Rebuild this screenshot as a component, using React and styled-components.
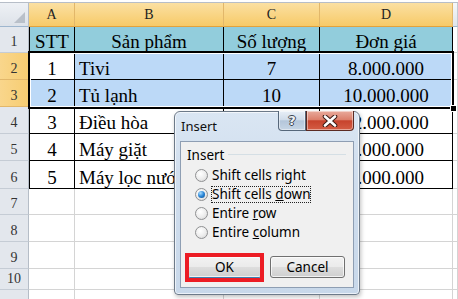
import React from 'react';
import styled, { createGlobalStyle } from 'styled-components';

const GlobalStyle = createGlobalStyle`
  html, body { margin: 0; padding: 0; background: #fff; }
  body { width: 458px; height: 299px; overflow: hidden; }
`;

const COLS = '29px 46px 149px 96px 133px 1fr';

const Sheet = styled.div`
  position: relative;
  width: 458px;
  height: 299px;
  overflow: hidden;
  background: #fff;
  font-family: "Liberation Serif", "Times New Roman", serif;
`;

const TopStrip = styled.div`
  height: 2px;
  background: #fff;
  border-bottom: 1px solid #b7bec8;
`;

const Row = styled.div`
  display: grid;
  grid-template-columns: ${COLS};
  height: ${p => p.$h}px;
`;

const Corner = styled.div`
  position: relative;
  box-sizing: border-box;
  background: linear-gradient(#eef1f5, #dde2e9);
  border-right: 1px solid #b5bdc7;
  border-bottom: 1px solid #9eb6ce;
  &::after {
    content: '';
    position: absolute;
    right: 3px;
    bottom: 3px;
    border-left: 11px solid transparent;
    border-bottom: 11px solid #b9c0c9;
  }
`;

const ColHead = styled.div`
  box-sizing: border-box;
  display: flex;
  align-items: center;
  justify-content: center;
  font-size: 14px;
  color: #222;
  background: ${p => p.$sel
    ? 'linear-gradient(#fbe0a2, #f7ca68)'
    : 'linear-gradient(#f6f8fa, #dfe4ea)'};
  border-right: 1px solid ${p => (p.$sel ? '#e2b76a' : '#c3cad3')};
  border-bottom: 1px solid ${p => (p.$sel ? '#e2a23c' : '#9eb6ce')};
`;

const RowHead = styled.div`
  box-sizing: border-box;
  display: flex;
  align-items: flex-end;
  justify-content: center;
  padding-bottom: 2px;
  font-size: 14px;
  line-height: 16px;
  color: #333;
  background: ${p => (p.$sel ? 'linear-gradient(90deg, #f9d68c, #f7cd72)' : '#e3e7ed')};
  border-right: 1px solid ${p => (p.$sel ? '#e2a23c' : '#b5bdc7')};
  border-bottom: 1px solid ${p => (p.$sel ? '#e2b76a' : '#c5ccd5')};
`;

const Cell = styled.div`
  box-sizing: border-box;
  display: flex;
  align-items: flex-end;
  justify-content: ${p => (p.$left ? 'flex-start' : 'center')};
  padding-left: ${p => (p.$left ? '4px' : '0')};
  background: ${p => p.$bg || '#fff'};
  border-right: 1px solid ${p => p.$rline || '#d4d4d4'};
  border-bottom: 1px solid ${p => p.$bline || '#d4d4d4'};
  border-left: ${p => (p.$first ? '1px solid #000' : 'none')};
  font-size: 19px;
  line-height: 21px;
  white-space: nowrap;
  overflow: hidden;
  color: #000;
`;

const Selection = styled.div`
  position: absolute;
  left: 28px;
  top: 51px;
  width: 426px;
  height: 58px;
  box-sizing: border-box;
  border: 2px solid #000;
  box-shadow: inset 0 0 0 1px #fff;
  pointer-events: none;
`;

const FillHandle = styled.div`
  position: absolute;
  left: 450px;
  top: 105px;
  width: 5px;
  height: 5px;
  background: #000;
  border: 1px solid #fff;
`;

/* ---------- dialog ---------- */

const Dialog = styled.div`
  position: absolute;
  left: 174px;
  top: 111px;
  width: 186px;
  height: 184px;
  box-sizing: border-box;
  display: flex;
  flex-direction: column;
  padding: 0 5px 6px 5px;
  border: 1px solid #6d7a89;
  border-radius: 6px 6px 4px 4px;
  background: linear-gradient(180deg, #dae6f3 0%, #cfdded 40%, #c8d8ea 100%);
  box-shadow: inset 0 0 0 1px rgba(255, 255, 255, 0.65), 1px 2px 4px rgba(0, 0, 0, 0.25);
  font-family: "Noto Sans", "Open Sans", sans-serif;
  font-size: 13.5px;
  color: #000;
`;

const TitleBar = styled.div`
  height: 29px;
  display: flex;
  align-items: flex-start;
  justify-content: space-between;
`;

const Title = styled.div`
  padding: 7px 0 0 1px;
  font-size: 13px;
  line-height: 15px;
  color: #111;
`;

const CaptionButtons = styled.div`
  display: flex;
  margin-top: -1px;
`;

const CapBtn = styled.div`
  height: 20px;
  width: ${p => p.$w}px;
  box-sizing: border-box;
  display: flex;
  align-items: center;
  justify-content: center;
  border: 1px solid ${p => (p.$close ? '#5b2a22' : '#56677a')};
  border-top: none;
  border-radius: ${p => (p.$close ? '0 0 4px 0' : '0 0 0 4px')};
  background: ${p => p.$close
    ? 'linear-gradient(#e9ab9c 0%, #dc806c 45%, #c7432d 52%, #d45d44 100%)'
    : 'linear-gradient(#e8eff7 0%, #d0dcea 45%, #b4c6da 52%, #c6d5e5 100%)'};
  box-shadow: inset 0 0 0 1px rgba(255, 255, 255, 0.45);
`;

const HelpGlyph = styled.span`
  font-family: "DejaVu Sans", sans-serif;
  font-weight: bold;
  font-size: 13px;
  line-height: 13px;
  color: #eef1f4;
  text-shadow: 1px 0 0 #3d4753, -1px 0 0 #3d4753, 0 1px 0 #3d4753, 0 -1px 0 #3d4753;
`;

const Client = styled.div`
  flex: 1;
  box-sizing: border-box;
  background: #f0f0f0;
  border: 1px solid #8e9eb3;
  padding: 5px 7px 0 6px;
  display: flex;
  flex-direction: column;
`;

const GroupHeader = styled.div`
  display: flex;
  align-items: center;
  height: 16px;
  line-height: 16px;
`;

const GroupLine = styled.div`
  flex: 1;
  height: 1px;
  margin: 0 0 2px 4px;
  background: #d5dfe5;
`;

const Options = styled.div`
  display: flex;
  flex-direction: column;
  margin-top: 3px;
  padding-left: 8px;
`;

const Option = styled.div`
  height: 19px;
  display: flex;
  align-items: center;
  gap: 2px;
`;

const Radio = styled.span`
  position: relative;
  flex: none;
  width: 13px;
  height: 13px;
  box-sizing: border-box;
  border-radius: 50%;
  border: 1px solid #8f9092;
  background: radial-gradient(circle at 40% 35%, #ffffff 0%, #ececec 55%, #d0d0d0 100%);
  &::after {
    content: '';
    display: ${p => (p.$on ? 'block' : 'none')};
    position: absolute;
    left: 2px;
    top: 2px;
    width: 7px;
    height: 7px;
    border-radius: 50%;
    background: radial-gradient(circle at 35% 30%, #a9dcff 0%, #2a86d6 50%, #0d4a8a 100%);
  }
`;

const Label = styled.span`
  display: inline-block;
  height: 19px;
  padding: 0 2px;
  line-height: 19px;
  white-space: nowrap;
  outline: ${p => (p.$focus ? '1px dotted #222' : 'none')};
  outline-offset: -2px;
`;

const Buttons = styled.div`
  display: flex;
  gap: 8px;
  margin-top: 14px;
`;

const Button = styled.div`
  position: relative;
  width: 75px;
  height: 22px;
  box-sizing: border-box;
  display: flex;
  align-items: center;
  justify-content: center;
  border: 1px solid ${p => (p.$default ? '#3c7fb1' : '#707070')};
  border-radius: 3px;
  background: linear-gradient(#f2f2f2 0%, #ebebeb 48%, #dddddd 52%, #cfcfcf 100%);
  box-shadow: inset 0 0 0 1px rgba(255, 255, 255, 0.7);
  font-size: 13.5px;
  &::after {
    content: '';
    display: ${p => (p.$mark ? 'block' : 'none')};
    position: absolute;
    left: -3px;
    top: -4px;
    right: -3px;
    bottom: -5px;
    border: 4px solid #ec1c24;
  }
`;

// C4:C6 sit fully behind the dialog, so they are left blank
const rows = [
  { n: 1, h: 26, head: true, cells: ['STT', 'Sản phẩm', 'Số lượng', 'Đơn giá'] },
  { n: 2, h: 27, sel: true, cells: ['1', 'Tivi', '7', '8.000.000'] },
  { n: 3, h: 27, sel: true, cells: ['2', 'Tủ lạnh', '10', '10.000.000'] },
  { n: 4, h: 27, cells: ['3', 'Điều hòa', '', '12.000.000'] },
  { n: 5, h: 27, cells: ['4', 'Máy giặt', '', '7.000.000'] },
  { n: 6, h: 28, cells: ['5', 'Máy lọc nước', '', '5.000.000'] },
  { n: 7, h: 26 },
  { n: 8, h: 27 },
  { n: 9, h: 27 },
  { n: 10, h: 21 },
  { n: 11, h: 27 },
];

function cellBg(row, i) {
  if (row.head) return '#92cddc';
  if (row.sel) return row.n === 2 && i === 0 ? '#fff' : '#bcd9f7';
  return '#fff';
}

function SheetRow({ row }) {
  const inTable = !!row.cells;
  const line = inTable ? '#000' : '#d4d4d4';
  const cells = row.cells || ['', '', '', ''];
  return (
    <Row $h={row.h}>
      <RowHead $sel={row.sel}>{row.n}</RowHead>
      {cells.map((text, i) => (
        <Cell
          key={i}
          $first={i === 0 && inTable}
          $left={!row.head && i === 1}
          $bg={cellBg(row, i)}
          $rline={line}
          $bline={line}
        >
          {text}
        </Cell>
      ))}
      <Cell />
    </Row>
  );
}

const options = [
  { label: <>Shift cells right</> },
  { label: <>Shift cells <u>d</u>own</>, on: true, focus: true },
  { label: <>Entire <u>r</u>ow</> },
  { label: <>Entire <u>c</u>olumn</> },
];

function InsertDialog() {
  return (
    <Dialog>
      <TitleBar>
        <Title>Insert</Title>
        <CaptionButtons>
          <CapBtn $w={28}>
            <HelpGlyph>?</HelpGlyph>
          </CapBtn>
          <CapBtn $w={48} $close>
            <svg width="16" height="12" viewBox="0 0 16 12">
              <path d="M3 1.5 L13 10.5 M13 1.5 L3 10.5" stroke="#3a1a14" strokeWidth="4.6" strokeLinecap="round" />
              <path d="M3 1.5 L13 10.5 M13 1.5 L3 10.5" stroke="#fff" strokeWidth="2.6" strokeLinecap="round" />
            </svg>
          </CapBtn>
        </CaptionButtons>
      </TitleBar>
      <Client>
        <GroupHeader>
          <span>Insert</span>
          <GroupLine />
        </GroupHeader>
        <Options>
          {options.map((o, i) => (
            <Option key={i}>
              <Radio $on={o.on} />
              <Label $focus={o.focus}>{o.label}</Label>
            </Option>
          ))}
        </Options>
        <Buttons>
          <Button $default $mark>OK</Button>
          <Button>Cancel</Button>
        </Buttons>
      </Client>
    </Dialog>
  );
}

export default function App() {
  return (
    <>
      <GlobalStyle />
      <Sheet>
        <TopStrip />
        <Row $h={24}>
          <Corner />
          <ColHead $sel>A</ColHead>
          <ColHead $sel>B</ColHead>
          <ColHead $sel>C</ColHead>
          <ColHead $sel>D</ColHead>
          <ColHead />
        </Row>
        {rows.map(r => (
          <SheetRow key={r.n} row={r} />
        ))}
        <Selection />
        <FillHandle />
        <InsertDialog />
      </Sheet>
    </>
  );
}
